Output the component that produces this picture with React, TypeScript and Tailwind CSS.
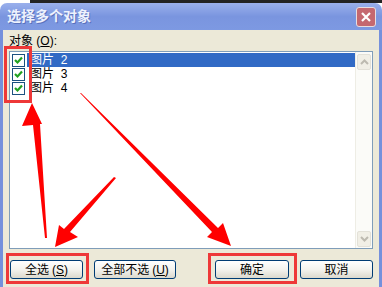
import React from "react"

const items = ["图片 2", "图片 3", "图片 4"]

const font = { fontFamily: '"Liberation Sans", "Noto Sans CJK SC", sans-serif' }

const CheckBox = () => (
    <span className="w-[13px] h-[13px] border border-[#1c5180] bg-white flex items-center justify-center shrink-0">
        <svg width="11" height="11" viewBox="0 0 11 11">
            <path d="M2 5 L4.5 7.5 L9 2.5" fill="none" stroke="#21a121" strokeWidth="2.2" />
        </svg>
    </span>
)

const XpButton = ({ label, accel, width }: { label: string, accel?: string, width: string }) => (
    <button
        type="button"
        className={`${width} h-[19px] rounded-[3px] border border-[#003c74] bg-gradient-to-b from-white via-[#f4f3ee] to-[#dcd9cd] text-[12px] leading-none text-black flex items-center justify-center`}
    >
        {label}
        {accel && (
            <span className="ml-[3px]">(<u>{accel}</u>)</span>
        )}
    </button>
)

export default function App() {
    return (
        <div className="relative w-[382px] h-[287px] flex flex-col overflow-hidden bg-white" style={font}>
            <div className="h-[3px] flex">
                <div className="w-[30px] bg-white" />
                <div className="flex-1 bg-[#232323]" />
            </div>

            {/* title bar */}
            <div className="h-[27px] rounded-t-[7px] bg-gradient-to-b from-[#9ab0ec] via-[#7a95df] to-[#7d99e2] flex items-center justify-between pl-[7px] pr-[6px]">
                <span className="text-[14px] font-bold text-[#eef2fd] tracking-[0px] [text-shadow:1px_1px_0_#5a72bd]">选择多个对象</span>
                <span className="w-[20px] h-[20px] rounded-[3px] border border-[#e8dde0] bg-[#c56870] flex items-center justify-center">
                    <svg width="12" height="12" viewBox="0 0 12 12">
                        <path d="M2 2 L10 10 M10 2 L2 10" stroke="white" strokeWidth="2.2" />
                    </svg>
                </span>
            </div>

            {/* body */}
            <div className="flex-1 flex flex-col border-x-[3px] border-[#7590dc] bg-[#ece9d8] px-[6px]">
                <div className="h-[21px] pt-[2px] pl-[0px] text-[12px] text-black">
                    对象 (<u>O</u>):
                </div>

                <div className="h-[198px] border border-[#7f9db9] bg-white flex">
                    <ul className="flex-1 pt-[1px] pl-[2px]">
                        {items.map((item, i) => (
                            <li key={item} className="h-[14px] flex items-center">
                                <CheckBox />
                                <span className={`ml-[2px] flex-1 h-[14px] flex items-center pl-[3px] text-[12px] whitespace-pre ${i === 0 ? "bg-[#316ac5] text-white" : "text-black"}`}>
                                    {item.replace(" ", "  ")}
                                </span>
                            </li>
                        ))}
                    </ul>
                    <div className="w-[17px] bg-[#fbfbf8] border-l border-[#eeede5] flex flex-col justify-between p-[1px] pt-[2px]">
                        <span className="h-[16px] rounded-[2px] border border-[#e3e1d8] bg-[#f1efe6] flex items-center justify-center">
                            <svg width="9" height="6" viewBox="0 0 9 6">
                                <path d="M1 5 L4.5 1.5 L8 5" fill="none" stroke="#bdbab0" strokeWidth="2" />
                            </svg>
                        </span>
                        <span className="h-[16px] rounded-[2px] border border-[#e3e1d8] bg-[#f1efe6] flex items-center justify-center">
                            <svg width="9" height="6" viewBox="0 0 9 6">
                                <path d="M1 1 L4.5 4.5 L8 1" fill="none" stroke="#bdbab0" strokeWidth="2" />
                            </svg>
                        </span>
                    </div>
                </div>

                <div className="mt-[11px] flex justify-between">
                    <div className="flex gap-[11px] ml-[1px]">
                        <XpButton label="全选" accel="S" width="w-[73px]" />
                        <XpButton label="全部不选" accel="U" width="w-[82px]" />
                    </div>
                    <div className="flex gap-[11px]">
                        <XpButton label="确定" width="w-[74px]" />
                        <XpButton label="取消" width="w-[73px]" />
                    </div>
                </div>
            </div>

            {/* annotations */}
            <div className="absolute left-[4px] top-[46px] w-[28px] h-[57px] border-[3px] border-[#ee3838]" />
            <div className="absolute left-[6px] top-[253px] w-[83px] h-[31px] border-[3px] border-[#ee3838]" />
            <div className="absolute left-[208px] top-[253px] w-[89px] h-[31px] border-[3px] border-[#ee3838]" />
            <svg className="absolute left-0 top-0" width="382" height="287" viewBox="0 0 382 287">
                <polygon points="45,238 47,238 40,124 42,124 32,103 22,126 33,125" fill="#ff0000" />
                <polygon points="114,177 116,178 70,232 78,237 55,247 59,225 64,229" fill="#ff0000" />
                <polygon points="80,93 81,93 218,228 223,223 231,246 207,237 212,232" fill="#ff0000" />
            </svg>
        </div>
    )
}
